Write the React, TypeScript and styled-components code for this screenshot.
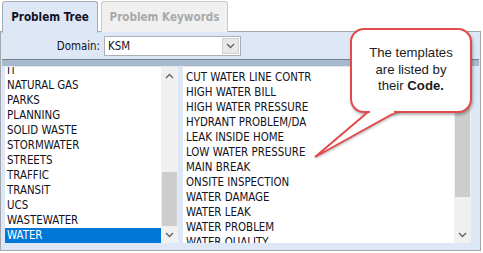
import React from "react";
import styled, { createGlobalStyle } from "styled-components";

const GlobalStyle = createGlobalStyle`
  html, body {
    margin: 0;
    padding: 0;
    background: #fff;
  }
  body {
    font-family: "DejaVu Sans Condensed", "DejaVu Sans", "Liberation Sans", sans-serif;
    font-stretch: condensed;
  }
`;

const Screen = styled.div`
  position: relative;
  width: 483px;
  height: 253px;
  overflow: hidden;
  background: #fff;
  font-size: 11.4px;
  color: #121222;
`;

const TabStrip = styled.div`
  position: relative;
  z-index: 1;
  display: flex;
  align-items: flex-start;
  gap: 3px;
  height: 31px;
  padding: 1px 0 0 2px;
  box-sizing: border-box;
`;

const Tab = styled.div<{ $active?: boolean; $width: number }>`
  box-sizing: border-box;
  width: ${(p) => p.$width}px;
  height: ${(p) => (p.$active ? 32 : 31)}px;
  display: flex;
  align-items: center;
  justify-content: center;
  padding-bottom: 1px;
  border: 1px solid ${(p) => (p.$active ? "#a3abb6" : "#cacaca")};
  border-bottom: none;
  border-radius: 3px 3px 0 0;
  background: ${(p) => (p.$active ? "#dde7f5" : "#f0f0f0")};
  color: ${(p) => (p.$active ? "#121222" : "#a9a9a9")};
  font-weight: bold;
  font-size: 11.6px;
`;

const Panel = styled.div`
  box-sizing: border-box;
  width: 481px;
  height: 220px;
  border: 1px solid #a3a8ae;
  background: #dde7f5;
  display: flex;
  flex-direction: column;
`;

const DomainRow = styled.div`
  display: flex;
  align-items: center;
  gap: 4px;
  height: 27px;
  padding-top: 1px;
  box-sizing: border-box;
`;

const DomainLabel = styled.span`
  width: 99px;
  text-align: right;
`;

const Combo = styled.div`
  box-sizing: border-box;
  width: 137px;
  height: 20px;
  display: flex;
  align-items: stretch;
  border: 1px solid #abb0b8;
  background: #fff;
`;

const ComboValue = styled.span`
  flex: 1;
  display: flex;
  align-items: center;
  padding-left: 3px;
`;

const ComboButton = styled.div`
  width: 17px;
  margin: 1px;
  display: flex;
  align-items: center;
  justify-content: center;
  background: #e8e8e8;
  border: 1px solid #cfcfcf;
  box-sizing: border-box;
`;

const Separator = styled.div`
  box-sizing: border-box;
  height: 7px;
  margin: 0 1px;
  border-top: 1px solid #6f8297;
  background: #a9b9cc;
`;

const ListsRow = styled.div`
  display: flex;
  gap: 5px;
  padding: 1px 0 0 4px;
`;

const ListBox = styled.div<{ $width: number }>`
  width: ${(p) => p.$width}px;
  height: 176px;
  display: flex;
  background: #fff;
`;

const Items = styled.div<{ $bottom?: boolean; $pad: number }>`
  flex: 1;
  min-width: 0;
  display: flex;
  flex-direction: column;
  justify-content: ${(p) => (p.$bottom ? "flex-end" : "flex-start")};
  padding-top: ${(p) => (p.$bottom ? 0 : 3)}px;
  overflow: hidden;
  --pad: ${(p) => p.$pad}px;
`;

const Row = styled.div<{ $selected?: boolean }>`
  flex: none;
  height: 15px;
  line-height: 15px;
  padding-left: var(--pad);
  white-space: nowrap;
  background: ${(p) => (p.$selected ? "#0078d7" : "transparent")};
  color: ${(p) => (p.$selected ? "#fff" : "#121222")};
`;

const ScrollBar = styled.div`
  width: 17px;
  display: flex;
  flex-direction: column;
  background: #f0f0f0;
`;

const ScrollArrow = styled.div`
  height: 17px;
  display: flex;
  align-items: center;
  justify-content: center;
`;

const ScrollTrack = styled.div`
  flex: 1;
  display: flex;
  flex-direction: column;
`;

const ScrollGap = styled.div<{ $size: number }>`
  height: ${(p) => p.$size}px;
`;

const ScrollThumb = styled.div<{ $size: number }>`
  height: ${(p) => p.$size}px;
  margin: 0 1px;
  background: #cdcdcd;
`;

const Callout = styled.div`
  position: absolute;
  z-index: 2;
  left: 350px;
  top: 28px;
  box-sizing: border-box;
  width: 122px;
  height: 85px;
  display: flex;
  align-items: center;
  justify-content: center;
  border: 2px solid #e24b4b;
  border-radius: 14px;
  background: #fff;
  box-shadow: 1px 2px 3px rgba(0, 0, 0, 0.3);
  font-family: "Liberation Sans", Arial, sans-serif;
  font-size: 13.2px;
  line-height: 16.5px;
  text-align: center;
  color: #1c1c1c;
  padding-bottom: 1px;
`;

const Tail = styled.svg`
  position: absolute;
  z-index: 3;
  left: 0;
  top: 0;
  pointer-events: none;
  filter: drop-shadow(1px 1px 1px rgba(0, 0, 0, 0.25));
`;

const Chevron = ({ up }: { up?: boolean }) => (
  <svg width="9" height="6" viewBox="0 0 9 6">
    <path
      d={up ? "M1 5 L4.5 1.5 L8 5" : "M1 1 L4.5 4.5 L8 1"}
      fill="none"
      stroke="#606060"
      strokeWidth="1.3"
    />
  </svg>
);

const LEFT_ITEMS = [
  "IT",
  "NATURAL GAS",
  "PARKS",
  "PLANNING",
  "SOLID WASTE",
  "STORMWATER",
  "STREETS",
  "TRAFFIC",
  "TRANSIT",
  "UCS",
  "WASTEWATER",
  "WATER",
];

const RIGHT_ITEMS = [
  "CUT WATER LINE CONTR",
  "HIGH WATER BILL",
  "HIGH WATER PRESSURE",
  "HYDRANT PROBLEM/DA",
  "LEAK INSIDE HOME",
  "LOW WATER PRESSURE",
  "MAIN BREAK",
  "ONSITE INSPECTION",
  "WATER DAMAGE",
  "WATER LEAK",
  "WATER PROBLEM",
  "WATER QUALITY",
];

function Scroll({ before, size }: { before: number; size: number }) {
  return (
    <ScrollBar>
      <ScrollArrow>
        <Chevron up />
      </ScrollArrow>
      <ScrollTrack>
        <ScrollGap $size={before} />
        <ScrollThumb $size={size} />
      </ScrollTrack>
      <ScrollArrow>
        <Chevron />
      </ScrollArrow>
    </ScrollBar>
  );
}

export default function App() {
  return (
    <Screen>
      <GlobalStyle />
      <TabStrip>
        <Tab $active $width={96}>Problem Tree</Tab>
        <Tab $width={127}>Problem Keywords</Tab>
      </TabStrip>
      <Panel>
        <DomainRow>
          <DomainLabel>Domain:</DomainLabel>
          <Combo>
            <ComboValue>KSM</ComboValue>
            <ComboButton>
              <Chevron />
            </ComboButton>
          </Combo>
        </DomainRow>
        <Separator />
        <ListsRow>
          <ListBox $width={173}>
            <Items $bottom $pad={2}>
              {LEFT_ITEMS.map((item) => (
                <Row key={item} $selected={item === "WATER"}>
                  {item}
                </Row>
              ))}
            </Items>
            <Scroll before={88} size={54} />
          </ListBox>
          <ListBox $width={288}>
            <Items $pad={3}>
              {RIGHT_ITEMS.map((item) => (
                <Row key={item}>{item}</Row>
              ))}
            </Items>
            <Scroll before={0} size={113} />
          </ListBox>
        </ListsRow>
      </Panel>
      <Callout>
        <div>
          The templates
          <br />
          are listed by
          <br />
          their <b>Code.</b>
        </div>
      </Callout>
      <Tail width="483" height="253" viewBox="0 0 483 253">
        <polygon
          points="368,112 315,157 396,112"
          fill="#fff"
          stroke="#e24b4b"
          strokeWidth="2"
        />
        <rect x="370" y="109.5" width="24" height="3.6" fill="#fff" />
      </Tail>
    </Screen>
  );
}
